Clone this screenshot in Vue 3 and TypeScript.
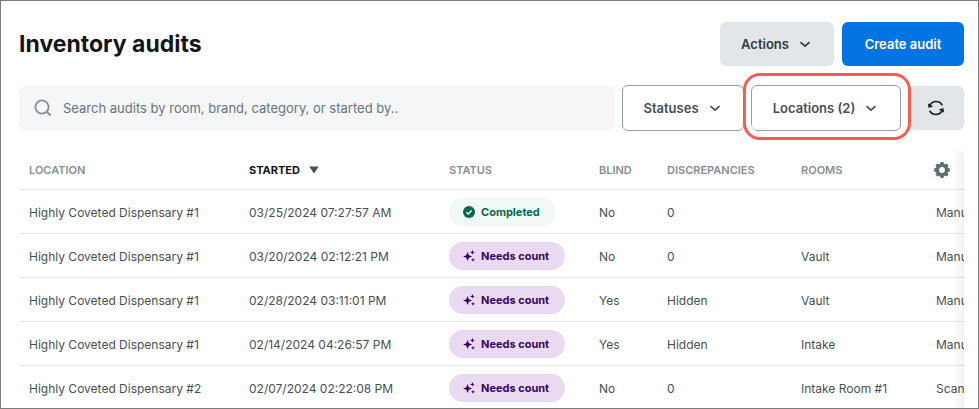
<script setup lang="ts">
import { ref, computed } from 'vue'

type Status = 'completed' | 'needs-count'

interface Audit {
  location: string
  started: string
  status: Status
  blind: boolean
  discrepancies: string
  rooms: string
  method: string
}

const statusLabels: Record<Status, string> = {
  completed: 'Completed',
  'needs-count': 'Needs count',
}

const search = ref('')
const descending = ref(true)

const audits = ref<Audit[]>([
  { location: 'Highly Coveted Dispensary #1', started: '03/25/2024 07:27:57 AM', status: 'completed', blind: false, discrepancies: '0', rooms: '', method: 'Manual' },
  { location: 'Highly Coveted Dispensary #1', started: '03/20/2024 02:12:21 PM', status: 'needs-count', blind: false, discrepancies: '0', rooms: 'Vault', method: 'Manual' },
  { location: 'Highly Coveted Dispensary #1', started: '02/28/2024 03:11:01 PM', status: 'needs-count', blind: true, discrepancies: 'Hidden', rooms: 'Vault', method: 'Manual' },
  { location: 'Highly Coveted Dispensary #1', started: '02/14/2024 04:26:57 PM', status: 'needs-count', blind: true, discrepancies: 'Hidden', rooms: 'Intake', method: 'Manual' },
  { location: 'Highly Coveted Dispensary #2', started: '02/07/2024 02:22:08 PM', status: 'needs-count', blind: false, discrepancies: '0', rooms: 'Intake Room #1', method: 'Scan' },
])

const rows = computed<Audit[]>(() => {
  const term = search.value.trim().toLowerCase()
  const found = audits.value.filter((a) => `${a.location} ${a.rooms}`.toLowerCase().includes(term))
  return descending.value ? found : [...found].reverse()
})
</script>

<template>
  <main class="page">
    <header class="header">
      <h1 class="title">Inventory audits</h1>
      <div class="header-actions">
        <button type="button" class="btn btn-grey" aria-haspopup="menu">
          Actions
          <svg class="chevron" viewBox="0 0 16 16" aria-hidden="true"><path d="M3.5 6.200 8 10.200l4.500-4" /></svg>
        </button>
        <button type="button" class="btn btn-primary">Create audit</button>
      </div>
    </header>

    <div class="toolbar">
      <label class="search">
        <svg class="search-icon" viewBox="0 0 18 18" aria-hidden="true">
          <circle cx="8" cy="8" r="6.600" /><path d="m12.800 12.800 3.700 3.700" />
        </svg>
        <input v-model="search" type="text" placeholder="Search audits by room, brand, category, or started by.." aria-label="Search audits" />
      </label>
      <button type="button" class="btn btn-outline" aria-haspopup="listbox">
        Statuses
        <svg class="chevron" viewBox="0 0 16 16" aria-hidden="true"><path d="M3.5 6.200 8 10.200l4.500-4" /></svg>
      </button>
      <div class="highlighted">
        <button type="button" class="btn btn-outline btn-wide" aria-haspopup="listbox">
          Locations (2)
          <svg class="chevron" viewBox="0 0 16 16" aria-hidden="true"><path d="M3.5 6.200 8 10.200l4.500-4" /></svg>
        </button>
        <span class="ring"></span>
      </div>
      <button type="button" class="btn btn-grey btn-icon" aria-label="Refresh">
        <svg class="refresh" viewBox="0 0 18 18" aria-hidden="true">
          <path class="arc" d="M2.800 6.600A6.900 6.900 0 0 1 15.300 6.400M15.200 11.400A6.900 6.900 0 0 1 2.700 11.600" />
          <path d="M.8 4.200 1.600 9 6.300 7.600zM17.200 13.800 16.400 9l-4.700 1.400z" />
        </svg>
      </button>
    </div>

    <section class="table-area">
      <table>
        <colgroup>
          <col class="c-location" /><col class="c-started" /><col class="c-status" /><col class="c-blind" />
          <col class="c-disc" /><col class="c-rooms" /><col class="c-method" />
        </colgroup>
        <thead>
          <tr>
            <th scope="col">LOCATION</th>
            <th scope="col" :aria-sort="descending ? 'descending' : 'ascending'">
              <button type="button" class="sort" @click="descending = !descending">
                STARTED
                <svg :class="{ flipped: !descending }" viewBox="0 0 10 8" aria-hidden="true"><path d="M.2.4h9.600L5 7.600z" /></svg>
              </button>
            </th>
            <th scope="col">STATUS</th>
            <th scope="col">BLIND</th>
            <th scope="col">DISCREPANCIES</th>
            <th scope="col">ROOMS</th>
            <th scope="col" class="settings-cell">
              <button type="button" class="settings" aria-label="Column settings">
                <svg viewBox="-8 -8 16 16" aria-hidden="true">
                  <g>
                    <path v-for="n in 8" :key="n" d="M-2.300-5-1.400-7.900h2.800L2.300-5z" :transform="`rotate(${n * 45})`" />
                  </g>
                  <circle class="gear-body" r="4.500" />
                </svg>
              </button>
            </th>
          </tr>
        </thead>
        <tbody>
          <tr v-for="audit in rows" :key="audit.started">
            <td>{{ audit.location }}</td>
            <td>{{ audit.started }}</td>
            <td class="status-cell">
              <span class="badge" :class="audit.status">
                <svg v-if="audit.status === 'completed'" viewBox="0 0 12 12" aria-hidden="true">
                  <circle cx="6" cy="6" r="6" /><path class="tick" d="m3.400 6.200 1.800 1.800 3.500-3.600" />
                </svg>
                <svg v-else viewBox="0 0 12 12" aria-hidden="true">
                  <path d="M4.600 1.900 5.900 5.200 9.200 6.500 5.900 7.800 4.600 11.100 3.300 7.800 0 6.500 3.300 5.200z" />
                  <path d="M9.400 0 10.100 1.700 11.900 2.400 10.100 3.100 9.400 4.800 8.700 3.100 6.900 2.400 8.700 1.700z" />
                  <path d="M10 7.900 10.600 9.200 11.900 9.800 10.600 10.400 10 11.700 9.400 10.400 8.100 9.800 9.400 9.200z" />
                </svg>
                {{ statusLabels[audit.status] }}
              </span>
            </td>
            <td>{{ audit.blind ? 'Yes' : 'No' }}</td>
            <td>{{ audit.discrepancies }}</td>
            <td>{{ audit.rooms }}</td>
            <td>{{ audit.method }}</td>
          </tr>
        </tbody>
      </table>
    </section>
  </main>
</template>

<style>
body {
  margin: 0;
  background: #fff;
}
</style>

<style scoped>
.page {
  box-sizing: border-box;
  height: 100vh;
  overflow: hidden;
  border: 1px solid #7b7b7b;
  padding: 21px 14px 0 18px;
  display: flex;
  flex-direction: column;
  gap: 19px;
  font-family: Inter, "Liberation Sans", sans-serif;
  font-size: 12px;
  color: #474f55;
}

.header,
.header-actions,
.toolbar {
  display: flex;
  align-items: center;
}

.header {
  justify-content: space-between;
}

.header-actions {
  gap: 8px;
}

.title {
  margin: 0;
  font-size: 23px;
  line-height: 28px;
  font-weight: 700;
  color: #121618;
}

.btn {
  box-sizing: border-box;
  height: 44px;
  padding: 0 20px;
  display: flex;
  align-items: center;
  justify-content: center;
  gap: 8px;
  flex: none;
  border: 0;
  border-radius: 6px;
  font: 600 13px/20px Inter, "Liberation Sans", sans-serif;
  white-space: nowrap;
  cursor: pointer;
}

.btn-grey {
  min-width: 114px;
  background: #e2e6e9;
  color: #33393d;
}

.btn-primary {
  min-width: 122px;
  background: #0474e2;
  color: #fff;
}

.btn-outline {
  min-width: 122px;
  height: 46px;
  border: 1px solid #949ea5;
  background: #fff;
  color: #474f55;
}

.btn-wide {
  min-width: 150px;
}

.toolbar .btn-icon {
  min-width: 56px;
  padding: 0;
}

.chevron {
  width: 16px;
  height: 16px;
  fill: none;
  stroke: currentColor;
  stroke-width: 1.700;
}

.toolbar {
  gap: 7px;
}

.search {
  box-sizing: border-box;
  flex: 1;
  min-width: 0;
  height: 44px;
  padding: 0 15px;
  display: flex;
  align-items: center;
  gap: 11px;
  border-radius: 6px;
  background: #f4f6f8;
}

.search-icon {
  flex: none;
  width: 18px;
  height: 18px;
  fill: none;
  stroke: #868e93;
  stroke-width: 1.800;
}

.search input {
  flex: 1;
  min-width: 0;
  padding: 0;
  border: 0;
  outline: 0;
  background: transparent;
  font: 400 13px/20px Inter, "Liberation Sans", sans-serif;
  color: #474f55;
}

.search input::placeholder {
  color: #69747a;
  opacity: 1;
}

.highlighted {
  position: relative;
  z-index: 1;
}

.ring {
  position: absolute;
  inset: -12px -10px -9px -8px;
  border: 3px solid #fb5b50;
  border-radius: 17px;
  box-shadow: inset 0 0 0 5px #fff;
  pointer-events: none;
}

.refresh {
  width: 18px;
  height: 18px;
  fill: #1d2225;
}

.refresh .arc {
  fill: none;
  stroke: #1d2225;
  stroke-width: 1.700;
}

.table-area {
  position: relative;
  flex: 1;
  min-height: 0;
  overflow: hidden;
  border-top-right-radius: 6px;
}

.table-area::after {
  content: "";
  position: absolute;
  inset: 0 0 0 auto;
  width: 12px;
  background: linear-gradient(to right, rgb(0 0 0 / 0), rgb(0 0 0 / 0.05));
  pointer-events: none;
}

table {
  width: 100%;
  min-width: 1007px;
  table-layout: fixed;
  border-collapse: separate;
  border-spacing: 0;
}

.c-location { width: 220px; }
.c-started { width: 200px; }
.c-status { width: 150px; }
.c-blind { width: 68px; }
.c-disc { width: 134px; }
.c-rooms { width: 135px; }

th,
td {
  box-sizing: border-box;
  padding: 0 0 0 10px;
  border-bottom: 1px solid #e1e3e5;
  text-align: left;
  vertical-align: middle;
  white-space: nowrap;
}

th {
  height: 40px;
  font-size: 11px;
  font-weight: 600;
  color: #868e93;
}

td {
  height: 44px;
  padding-top: 2px;
  font-size: 12px;
}

.status-cell {
  padding-top: 0;
}

.sort,
.settings {
  display: flex;
  align-items: center;
  padding: 0;
  border: 0;
  background: none;
  cursor: pointer;
}

.sort {
  gap: 9px;
  font: 700 11px/16px Inter, "Liberation Sans", sans-serif;
  color: #121618;
}

.sort svg {
  width: 10px;
  height: 8px;
  fill: #474f55;
}

.sort .flipped {
  transform: rotate(180deg);
}

.settings-cell {
  padding-left: 8px;
}

.settings svg {
  width: 16px;
  height: 16px;
  fill: #606b72;
}

.settings .gear-body {
  fill: none;
  stroke: #606b72;
  stroke-width: 3.200;
}

.badge {
  display: inline-flex;
  align-items: center;
  gap: 6px;
  height: 28px;
  padding: 0 16px 0 14px;
  border-radius: 14px;
  font-size: 11px;
  font-weight: 700;
  vertical-align: middle;
}

.badge svg {
  width: 12px;
  height: 12px;
  fill: currentColor;
}

.badge .tick {
  fill: none;
  stroke: #fff;
  stroke-width: 1.400;
}

.completed {
  background: #f1f8f7;
  color: #04674d;
}

.needs-count {
  background: #e9daf1;
  color: #3b0560;
}
</style>
